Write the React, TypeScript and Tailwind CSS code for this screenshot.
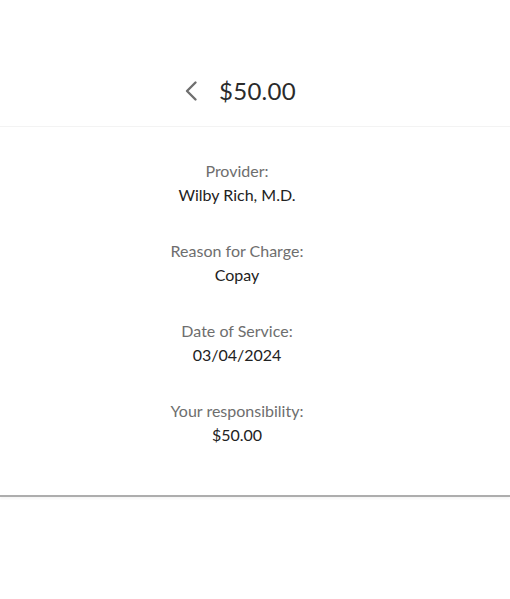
import React from "react";

const items = [
  { label: "Provider:", value: "Wilby Rich, M.D." },
  { label: "Reason for Charge:", value: "Copay" },
  { label: "Date of Service:", value: "03/04/2024" },
  { label: "Your responsibility:", value: "$50.00" },
];

export default function App() {
  return (
    <div className="w-[510px] h-[599px] bg-white" style={{ fontFamily: "Lato, 'Noto Sans', sans-serif" }}>
      <div className="h-[127px] border-b border-[#f3f3f3]">
        <div className="w-[474px] h-full flex items-end justify-center pb-[19px]">
          <div className="flex items-center gap-[21px] ml-[6px]">
            <svg width="14" height="22" viewBox="0 0 14 22" fill="none">
              <path d="M11.5 2.5 L3 11 L11.5 19.5" stroke="#6f6f6f" strokeWidth="2.4" strokeLinecap="round" strokeLinejoin="round" />
            </svg>
            <span className="text-[24px] leading-[32px] text-[#2b2b2b] tracking-[0.3px]">$50.00</span>
          </div>
        </div>
      </div>
      <div className="border-b-2 border-[#adadad] shadow-[0_2px_2px_rgba(0,0,0,0.04)]">
        <div className="w-[474px] flex flex-col items-center gap-[32px] pt-[32px] pb-[48px]">
          {items.map((it) => (
            <div key={it.label} className="flex flex-col items-center text-[16px] leading-[24px]">
              <span className="text-[#6e6e6e]">{it.label}</span>
              <span className="text-[#222222]">{it.value}</span>
            </div>
          ))}
        </div>
      </div>
    </div>
  );
}
